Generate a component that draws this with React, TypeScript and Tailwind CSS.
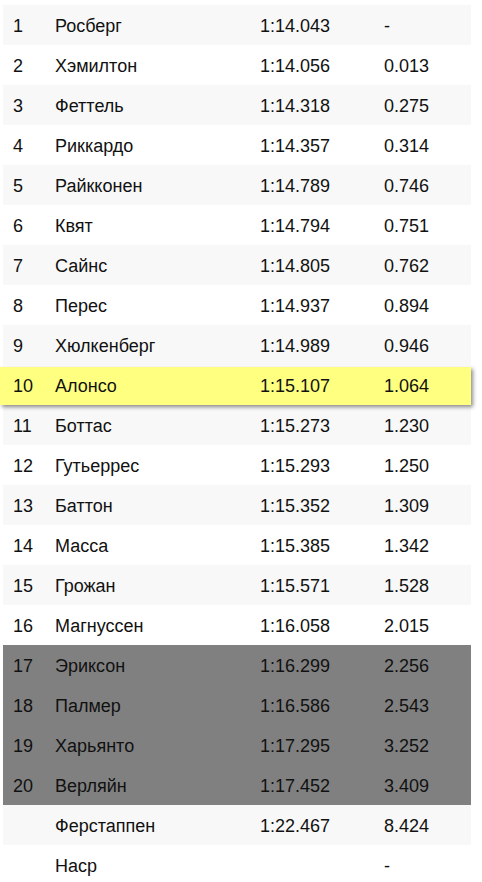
import React from "react";

type Row = { pos: string; name: string; time: string; gap: string };

const rows: Row[] = [
  { pos: "1", name: "Росберг", time: "1:14.043", gap: "-" },
  { pos: "2", name: "Хэмилтон", time: "1:14.056", gap: "0.013" },
  { pos: "3", name: "Феттель", time: "1:14.318", gap: "0.275" },
  { pos: "4", name: "Риккардо", time: "1:14.357", gap: "0.314" },
  { pos: "5", name: "Райкконен", time: "1:14.789", gap: "0.746" },
  { pos: "6", name: "Квят", time: "1:14.794", gap: "0.751" },
  { pos: "7", name: "Сайнс", time: "1:14.805", gap: "0.762" },
  { pos: "8", name: "Перес", time: "1:14.937", gap: "0.894" },
  { pos: "9", name: "Хюлкенберг", time: "1:14.989", gap: "0.946" },
  { pos: "10", name: "Алонсо", time: "1:15.107", gap: "1.064" },
  { pos: "11", name: "Боттас", time: "1:15.273", gap: "1.230" },
  { pos: "12", name: "Гутьеррес", time: "1:15.293", gap: "1.250" },
  { pos: "13", name: "Баттон", time: "1:15.352", gap: "1.309" },
  { pos: "14", name: "Масса", time: "1:15.385", gap: "1.342" },
  { pos: "15", name: "Грожан", time: "1:15.571", gap: "1.528" },
  { pos: "16", name: "Магнуссен", time: "1:16.058", gap: "2.015" },
  { pos: "17", name: "Эриксон", time: "1:16.299", gap: "2.256" },
  { pos: "18", name: "Палмер", time: "1:16.586", gap: "2.543" },
  { pos: "19", name: "Харьянто", time: "1:17.295", gap: "3.252" },
  { pos: "20", name: "Верляйн", time: "1:17.452", gap: "3.409" },
  { pos: "", name: "Ферстаппен", time: "1:22.467", gap: "8.424" },
  { pos: "", name: "Наср", time: "", gap: "-" },
];

function Cells({ r }: { r: Row }) {
  return (
    <>
      <div className="w-[42px] pl-[10px]">{r.pos}</div>
      <div className="w-[205px] pl-[10px]">{r.name}</div>
      <div className="w-[124px] pl-[10px]">{r.time}</div>
      <div className="flex-1 pl-[10px]">{r.gap}</div>
    </>
  );
}

export default function App() {
  return (
    <div
      className="w-[482px] h-[882px] bg-white overflow-hidden text-[18px] leading-[20px] text-[#111111]"
      style={{ fontFamily: '"Liberation Sans", Arial, sans-serif' }}
    >
      <div className="pt-[5px] pl-[3px] w-[471px]">
        {rows.map((r, i) => {
          const isHighlight = r.pos === "10";
          const isGray = i >= 16 && i <= 19;
          if (isHighlight) {
            return (
              <div key={i} className="h-[40px] flex items-end">
                <div className="-ml-[3px] w-[471px] h-[38px] flex items-center bg-[#ffff80] shadow-[2px_2px_4px_rgba(0,0,0,0.45)] relative z-10">
                  <div className="w-[3px]" />
                  <Cells r={r} />
                </div>
              </div>
            );
          }
          const bg = isGray ? "bg-[#808080]" : i % 2 === 0 ? "bg-[#f8f8f8]" : "bg-white";
          return (
            <div key={i} className={`h-[40px] pt-[1px] flex items-center ${bg}`}>
              <Cells r={r} />
            </div>
          );
        })}
      </div>
    </div>
  );
}
